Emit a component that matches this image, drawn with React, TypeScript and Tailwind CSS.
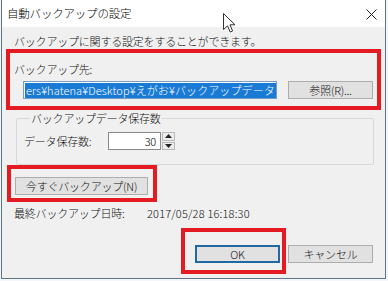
const jp = { fontFamily: '"Noto Sans CJK JP", "Noto Sans", sans-serif' };

const Btn = ({ label, className }: { label: string; className?: string }) => (
  <div
    className={
      "flex h-[18px] items-center justify-center border border-[#adadad] bg-[#e1e1e1] text-[11px] leading-none text-[#111] " +
      (className ?? "")
    }
  >
    {label}
  </div>
);

export default function App() {
  return (
    <div className="relative h-[281px] w-[388px] overflow-hidden bg-[#f4f6f9] text-[11px] font-light tracking-[-0.2px] text-[#111]" style={jp}>
      <div className="ml-[1px] flex h-[279px] w-[385px] flex-col border-x border-b border-[#5f7387] bg-[#f0f0f0]">
        {/* title bar */}
        <div className="flex h-[27px] items-center justify-between bg-white pl-[5px] pr-[8px]">
          <span className="text-[11.5px] text-black">自動バックアップの設定</span>
          <svg width="11" height="11" viewBox="0 0 11 11" className="mt-[1px]">
            <path d="M0.5 0.5 L10.5 10.5 M10.5 0.5 L0.5 10.5" stroke="#222" strokeWidth="1" />
          </svg>
        </div>

        <p className="mt-[7px] pl-[12px] leading-[15px]">バックアップに関する設定をすることができます。</p>

        {/* destination */}
        <div className="ml-[4px] h-[61px] w-[375px] border-4 border-[#e41b23] pt-[8px]">
          <div className="pl-[4px] leading-[16px]">バックアップ先:</div>
          <div className="mt-[4px] flex items-center pl-[13px]">
            <div className="flex h-[18px] w-[254px] items-center overflow-hidden border border-[#7a9cc0] bg-white px-[1px]">
              <span className="whitespace-nowrap bg-[#1a7bd6] px-[1px] leading-[15px] tracking-[0.1px] text-white">
                ers¥hatena¥Desktop¥えがお¥バックアップデータ
              </span>
            </div>
            <Btn label="参照(R)..." className="ml-[11px] w-[85px]" />
          </div>
        </div>

        {/* group box */}
        <fieldset className="ml-[14px] w-[358px] rounded-[2px] border border-[#d8d8d8] pb-[14px] pl-[7px]">
          <legend className="ml-[6px] px-[1px] leading-[16px]">バックアップデータ保存数</legend>
          <div className="mt-[6px] flex items-center">
            <span className="w-[84px] leading-[16px]">データ保存数:</span>
            <div className="flex h-[18px] w-[53px] items-center justify-end border border-[#8a8a8a] bg-white pr-[4px] text-black">
              30
            </div>
            <div className="flex h-[18px] w-[15px] flex-col gap-[1px] px-[1px]">
              <div className="flex flex-1 items-center justify-center border border-[#b9b9b9] bg-[#ececec]">
                <svg width="7" height="4" viewBox="0 0 7 4"><path d="M0 4 L3.5 0 L7 4 Z" fill="#222" /></svg>
              </div>
              <div className="flex flex-1 items-center justify-center border border-[#b9b9b9] bg-[#ececec]">
                <svg width="7" height="4" viewBox="0 0 7 4"><path d="M0 0 L3.5 4 L7 0 Z" fill="#222" /></svg>
              </div>
            </div>
          </div>
        </fieldset>

        {/* backup now */}
        <div className="ml-[5px] h-[37px] w-[150px] border-4 border-[#e41b23] pl-[4px] pt-[8px]">
          <Btn label="今すぐバックアップ(N)" className="w-[133px]" />
        </div>

        <div className="mt-[3px] flex pl-[12px] leading-[16px]">
          <span className="w-[133px]">最終バックアップ日時:</span>
          <span className="tracking-[0.2px]">2017/05/28 16:18:30</span>
        </div>

        {/* dialog buttons */}
        <div className="ml-[179px] mt-[7px] flex items-start">
          <div className="h-[46px] w-[105px] border-4 border-[#e41b23] pl-[10px] pt-[13px]">
            <div className="flex h-[18px] w-[85px] items-center justify-center border-2 border-[#2169a3] bg-[#e1e1e1] leading-none">
              OK
            </div>
          </div>
          <Btn label="キャンセル" className="ml-[2px] mt-[17px] w-[85px]" />
        </div>
      </div>

      {/* mouse cursor */}
      <svg width="13" height="20" viewBox="0 0 13 20" className="absolute left-[223px] top-[13px]">
        <path d="M0.5 0.5 L0.5 16.5 L4.5 12.8 L7.2 19 L9.6 18 L7 11.8 L12 11.8 Z" fill="white" stroke="#333" strokeWidth="1" strokeLinejoin="round" />
      </svg>
    </div>
  );
}
